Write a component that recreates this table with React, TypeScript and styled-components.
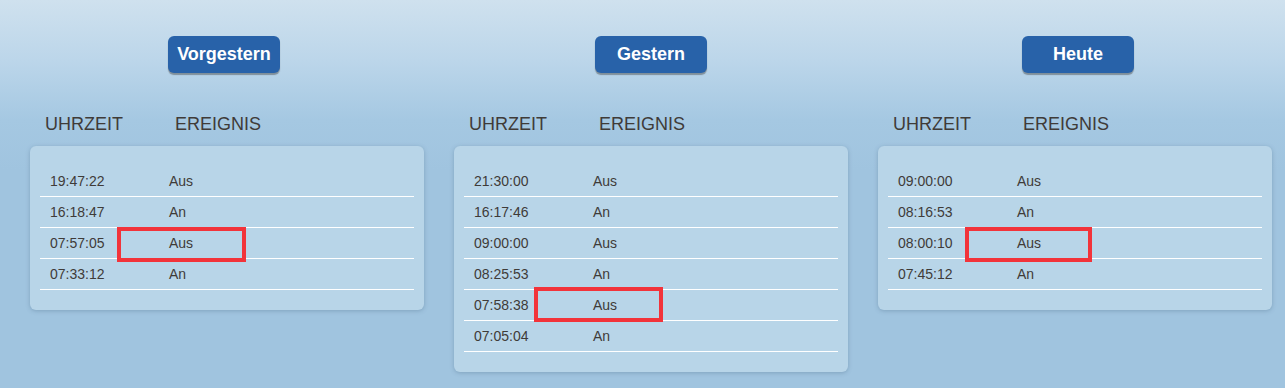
import React, { ReactElement } from 'react';
import styled, { createGlobalStyle } from 'styled-components';

const colors = {
  TEXT: '#3f3b38',
  BLUE: '#2862a9',
  CARD: '#b8d5e8',
  RED: '#f2333a',
};

const GlobalStyle = createGlobalStyle`
  html, body {
    margin: 0;
    padding: 0;
  }
  body {
    width: 1285px;
    height: 388px;
    overflow: hidden;
    font-family: "Liberation Sans", Arial, sans-serif;
    background: linear-gradient(180deg, #cfe1ee 0px, #bcd6ea 60px, #a5c8e2 120px, #a0c4df 170px, #a0c4df 100%);
  }
`;

const Page = styled.div`
  display: flex;
  gap: 30px;
  padding-left: 30px;
  height: 388px;
`;

const Column = styled.div`
  display: flex;
  flex-direction: column;
  width: 394px;
`;

const ButtonRow = styled.div`
  display: flex;
  justify-content: center;
  margin-top: 36px;
`;

const DayButton = styled.button<{ $shift: number }>`
  width: 112px;
  height: 37px;
  margin-left: ${(p) => p.$shift}px;
  padding: 0;
  border: none;
  border-radius: 6px;
  background: ${colors.BLUE};
  color: #fff;
  font-family: "Liberation Sans", Arial, sans-serif;
  font-weight: bold;
  font-size: 18px;
  box-shadow: 0 2px 1px rgba(60, 60, 60, 0.45);
  cursor: pointer;
`;

const HeaderRow = styled.div`
  display: flex;
  margin-top: 41px;
  padding-left: 15px;
  height: 21px;
  line-height: 21px;
  font-size: 18px;
  color: ${colors.TEXT};
`;

const HeaderCell = styled.div<{ $w?: number }>`
  width: ${(p) => (p.$w ? `${p.$w}px` : 'auto')};
`;

const Card = styled.div`
  margin-top: 11px;
  padding: 20px 10px;
  background: ${colors.CARD};
  border-radius: 6px;
  box-shadow: 0 1px 4px rgba(70, 100, 130, 0.35);
`;

const Row = styled.div`
  position: relative;
  display: flex;
  align-items: center;
  height: 30px;
  border-bottom: 1px solid #fff;
  padding-left: 10px;
  font-size: 14px;
  color: ${colors.TEXT};
`;

const TimeCell = styled.div`
  width: 119px;
`;

const EventCell = styled.div``;

const Highlight = styled.div<{ $left: number; $top: number; $w: number }>`
  position: absolute;
  left: ${(p) => p.$left}px;
  top: ${(p) => p.$top}px;
  width: ${(p) => p.$w}px;
  height: 35px;
  box-sizing: border-box;
  border: 4px solid ${colors.RED};
`;

type Entry = { time: string; event: string };

type DayProps = {
  title: string;
  shift: number;
  entries: Entry[];
  mark: number;
  markLeft: number;
  markTop: number;
  markWidth: number;
};

const days: DayProps[] = [
  {
    title: 'Vorgestern',
    shift: -6,
    entries: [
      { time: '19:47:22', event: 'Aus' },
      { time: '16:18:47', event: 'An' },
      { time: '07:57:05', event: 'Aus' },
      { time: '07:33:12', event: 'An' },
    ],
    mark: 2,
    markLeft: 77,
    markTop: -1,
    markWidth: 129,
  },
  {
    title: 'Gestern',
    shift: 0,
    entries: [
      { time: '21:30:00', event: 'Aus' },
      { time: '16:17:46', event: 'An' },
      { time: '09:00:00', event: 'Aus' },
      { time: '08:25:53', event: 'An' },
      { time: '07:58:38', event: 'Aus' },
      { time: '07:05:04', event: 'An' },
    ],
    mark: 4,
    markLeft: 70,
    markTop: -3,
    markWidth: 129,
  },
  {
    title: 'Heute',
    shift: 6,
    entries: [
      { time: '09:00:00', event: 'Aus' },
      { time: '08:16:53', event: 'An' },
      { time: '08:00:10', event: 'Aus' },
      { time: '07:45:12', event: 'An' },
    ],
    mark: 2,
    markLeft: 77,
    markTop: -1,
    markWidth: 127,
  },
];

const DayColumn = ({ title, shift, entries, mark, markLeft, markTop, markWidth }: DayProps): ReactElement => {
  return (
    <Column>
      <ButtonRow>
        <DayButton $shift={shift}>{title}</DayButton>
      </ButtonRow>
      <HeaderRow>
        <HeaderCell $w={130}>UHRZEIT</HeaderCell>
        <HeaderCell>EREIGNIS</HeaderCell>
      </HeaderRow>
      <Card>
        {entries.map((e, i) => (
          <Row key={e.time}>
            <TimeCell>{e.time}</TimeCell>
            <EventCell>{e.event}</EventCell>
            {i === mark && <Highlight $left={markLeft} $top={markTop} $w={markWidth} />}
          </Row>
        ))}
      </Card>
    </Column>
  );
};

const App = (): ReactElement => {
  return (
    <>
      <GlobalStyle />
      <Page>
        {days.map((d) => (
          <DayColumn key={d.title} {...d} />
        ))}
      </Page>
    </>
  );
};

export default App;
